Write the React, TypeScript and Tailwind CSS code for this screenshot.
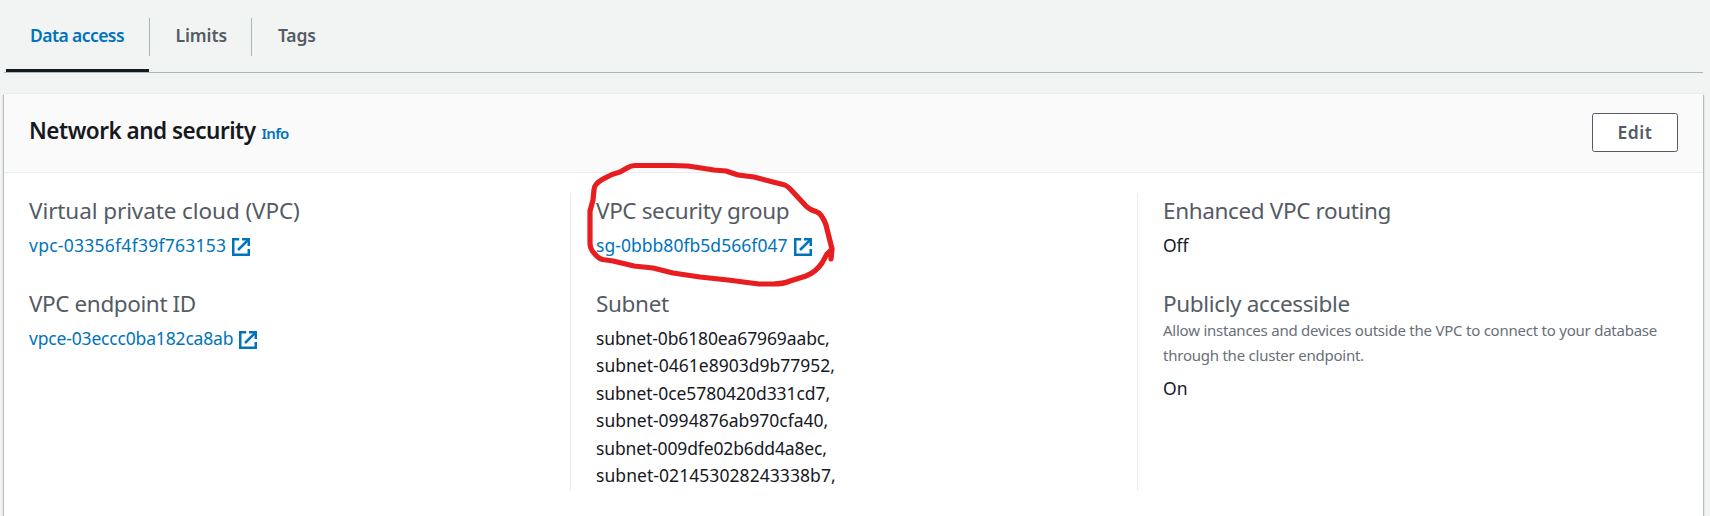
import React from "react";
import type { ReactNode } from "react";

function ExternalIcon() {
  return (
    <svg viewBox="0 0 18 18" className="mt-[3px] size-[18px] shrink-0" fill="none" stroke="#0073bb" strokeWidth="2.5">
      <path d="M7.2 1.25H1.25V16.75H16.75V11" />
      <path d="M10 1.25H16.75V8" />
      <path d="M16.2 1.8L6 12" />
    </svg>
  );
}

function Label({ children, track }: { children: ReactNode; track: string }) {
  return <h3 className={`h-7 whitespace-nowrap text-[22.5px] leading-7 text-[#545b64] ${track}`}>{children}</h3>;
}

function ResourceLink({ text, track }: { text: string; track: string }) {
  return (
    <a href="#" className="mt-[7px] flex h-[27px] items-center gap-[6px] text-[#0073bb]">
      <span className={`leading-[27px] ${track}`}>{text}</span>
      <ExternalIcon />
    </a>
  );
}

const subnets = [
  { id: "subnet-0b6180ea67969aabc,", track: "tracking-[-0.12px]" },
  { id: "subnet-0461e8903d9b77952,", track: "tracking-[0.01px]" },
  { id: "subnet-0ce5780420d331cd7,", track: "tracking-[-0.06px]" },
  { id: "subnet-0994876ab970cfa40,", track: "tracking-[0px]" },
  { id: "subnet-009dfe02b6dd4a8ec,", track: "tracking-[-0.14px]" },
  { id: "subnet-021453028243338b7,", track: "tracking-[0.06px]" },
];

export default function App() {
  return (
    <div className="h-[516px] overflow-hidden bg-[#f2f3f3] font-['Noto_Sans',sans-serif] text-[17.5px] text-[#16191f]">
      <nav className="ml-1 mr-[7px] flex h-[73px] border-b border-[#aab7b8] pl-[2px] font-semibold text-[#545b64]">
        <div className="flex h-[72px] w-[143px] border-b-[3px] border-[#16191f] pl-6 pt-[17px] text-[#0073bb]">
          <span className="h-9 whitespace-nowrap leading-9 tracking-[-0.57px]">Data access</span>
        </div>
        <div className="mt-[18px] h-[38px] w-[102px] border-l border-[#aab7b8] pl-[25.5px] leading-[34px] tracking-[-0.07px]">Limits</div>
        <div className="mt-[18px] h-[38px] border-l border-[#aab7b8] pl-[26px] leading-[34px] tracking-[-0.2px]">Tags</div>
      </nav>

      <section className="relative ml-1 mr-[7px] mt-[21px] h-[430px] bg-white shadow-[0_-1px_0_0_#eaeded,1px_1px_1px_0_rgba(0,28,36,0.25),-1px_1px_1px_0_rgba(0,28,36,0.25)]">
        <header className="flex h-[79px] items-start justify-between border-b border-[#eaeded] bg-[#fafafa] pl-[25px] pr-[25px] pt-[19px]">
          <div className="flex items-baseline gap-[6px] whitespace-nowrap">
            <h2 className="text-[22.5px] font-semibold leading-9 tracking-[-0.5px]">Network and security</h2>
            <a href="#" className="text-[15px] font-semibold tracking-[-0.7px] text-[#0073bb]">Info</a>
          </div>
          <button className="h-[39px] w-[86px] rounded-[2.5px] border border-[#545b64] bg-white pb-[2px] font-semibold leading-[34px] tracking-[0.5px] text-[#545b64]">
            Edit
          </button>
        </header>

        <div className="flex h-[318px] pl-[25px] pt-5">
          <div className="w-[541px] pt-1">
            <Label track="tracking-[-0.09px]">Virtual private cloud (VPC)</Label>
            <ResourceLink text="vpc-03356f4f39f763153" track="tracking-[0.26px]" />
            <div className="h-[31px]" />
            <Label track="tracking-[-0.4px]">VPC endpoint ID</Label>
            <ResourceLink text="vpce-03eccc0ba182ca8ab" track="tracking-[-0.17px]" />
          </div>

          <div className="w-[567px] border-l border-[#eaeded] pl-[25px] pt-1">
            <Label track="tracking-[-0.37px]">VPC security group</Label>
            <ResourceLink text="sg-0bbb80fb5d566f047" track="tracking-[0.04px]" />
            <div className="h-[31px]" />
            <Label track="tracking-[-0.34px]">Subnet</Label>
            <div className="mt-[6.75px]">
              {subnets.map((s) => (
                <div key={s.id} className={`h-[27.5px] leading-[27.5px] ${s.track}`}>{s.id}</div>
              ))}
            </div>
          </div>

          <div className="flex-1 border-l border-[#eaeded] pl-[25px] pt-1">
            <Label track="tracking-[-0.36px]">Enhanced VPC routing</Label>
            <div className="mt-[7px] h-[27px] leading-[27px] tracking-[-0.08px]">Off</div>
            <div className="h-[31px]" />
            <Label track="tracking-[-0.35px]">Publicly accessible</Label>
            <p className="w-[500px] text-[15px] leading-[25px] tracking-[-0.235px] text-[#687078]">
              Allow instances and devices outside the VPC to connect to your database through the cluster endpoint.
            </p>
            <div className="mt-[7px] leading-[27px]">On</div>
          </div>
        </div>

        <svg viewBox="560 150 300 150" className="pointer-events-none absolute left-[556px] top-[56px] h-[150px] w-[300px]" fill="none" stroke="#e71d1f" strokeWidth="5.2" strokeLinecap="round" strokeLinejoin="round">
          <path d="M832 249L826 225Q822 214 817 212Q810 210 806 206L793 192Q787 185 783 184.500L773 182L754 177L738 175L726 171L714 170L688 166Q680 165.500 672 165.500H635Q631 165.500 627 168L620 172Q611 174 603 179Q594 184 594 190L593 200L590 211V243Q590 249 594 253Q599 260 606 260L613 261L634 266L653 268L673 273L700 277L728 280L759 284H773Q783 284 790 281L806 276Q816 272 822 263L827 254L832 249L831 259" />
        </svg>
      </section>
    </div>
  );
}
